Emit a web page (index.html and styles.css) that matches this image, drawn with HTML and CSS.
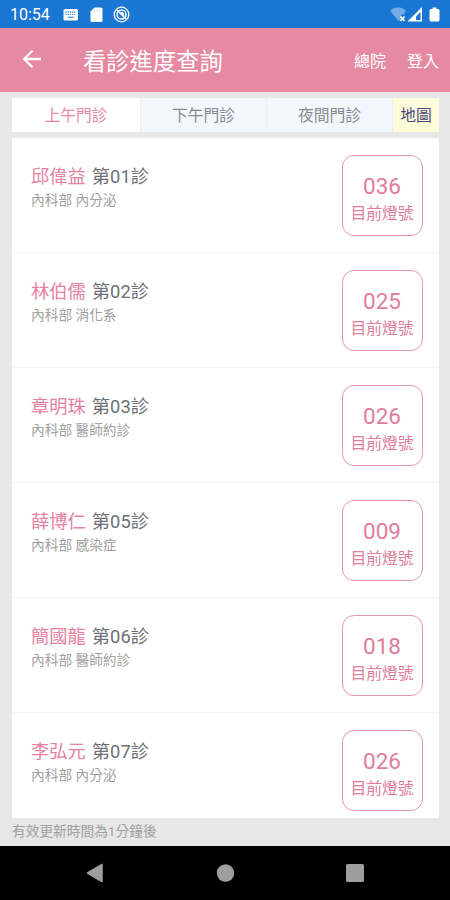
FILE: index.html
```html
<!DOCTYPE html>
<html lang="zh-Hant">
<head>
<meta charset="utf-8">
<title>看診進度查詢</title>
<link rel="stylesheet" href="styles.css">
</head>
<body>
<div class="screen">
  <div class="status">
    <span class="time">10:54</span>
    <svg class="status-icons" width="68" height="18" viewBox="0 0 68 18">
      <rect x="0.5" y="4" width="14.5" height="11.5" rx="1.5" fill="#fff"/>
      <path d="M2.500 7h10.500M2.500 9.300h10.500" stroke="#4a92dc" stroke-width="1.300" stroke-dasharray="1.300 .8"/>
      <path d="M5 12.300h6" stroke="#4a92dc" stroke-width="1.200"/>
      <path d="M31.500 2.500h6.500q1.500 0 1.500 1.500v11.500q0 1.500-1.500 1.500h-9q-1.500 0-1.500-1.500v-9z" fill="#fff"/>
      <path d="M31.500 4.500v2M34 4.500v2M36.500 4.500v2" stroke="#a9cdf2" stroke-width=".9"/>
      <circle cx="58.500" cy="9.500" r="7.300" fill="none" stroke="#fff" stroke-width="1.300"/>
      <circle cx="58.500" cy="9.500" r="4.500" fill="none" stroke="#fff" stroke-width="1.500"/>
      <path d="M54 5l9 9M57.500 7.500q3 0 3 3" fill="none" stroke="#fff" stroke-width="1.500"/>
    </svg>
    <svg class="signals" width="52" height="18" viewBox="0 0 52 18">
      <path d="M0 5.500q8-6.500 16 0l-2 4h-3v4.500l-2.500 2z" fill="#73abe6"/>
      <path d="M10.500 11.500l4 4.500M14.500 11.500l-4 4.500" stroke="#fff" stroke-width="1.700"/>
      <path d="M32 2v14.500H17.500z" fill="#fff"/>
      <path d="M30.500 7v8h-4.500v-3.500z" fill="#1976d2"/>
      <path d="M42.500 2.500h4v1.500h1.500q1.500 0 1.500 1.500v9.500q0 1.500-1.500 1.500h-7q-1.500 0-1.500-1.500v-9.500q0-1.500 1.500-1.500h1.500z" fill="#fff"/>
    </svg>
  </div>
  <header class="appbar">
    <svg class="back" width="20" height="20" viewBox="0 0 20 20">
      <path d="M19 10H2.500M10.500 1.700L2.200 10l8.300 8.300" fill="none" stroke="#fff" stroke-width="2.300"/>
    </svg>
    <h1 class="title">看診進度查詢</h1>
    <a class="action">總院</a>
    <a class="action">登入</a>
  </header>
  <main class="content">
    <nav class="tabs">
      <a class="tab active">上午門診</a>
      <a class="tab">下午門診</a>
      <a class="tab">夜間門診</a>
      <a class="map">地圖</a>
    </nav>
    <section class="list">
      <article class="row"><div class="info"><div class="line"><span class="doctor">邱偉益</span><span class="room">第01診</span></div><div class="dept">內科部 內分泌</div></div><div class="badge"><span class="num">036</span><span class="label">目前燈號</span></div></article>
      <article class="row"><div class="info"><div class="line"><span class="doctor">林伯儒</span><span class="room">第02診</span></div><div class="dept">內科部 消化系</div></div><div class="badge"><span class="num">025</span><span class="label">目前燈號</span></div></article>
      <article class="row"><div class="info"><div class="line"><span class="doctor">章明珠</span><span class="room">第03診</span></div><div class="dept">內科部 醫師約診</div></div><div class="badge"><span class="num">026</span><span class="label">目前燈號</span></div></article>
      <article class="row"><div class="info"><div class="line"><span class="doctor">薛博仁</span><span class="room">第05診</span></div><div class="dept">內科部 感染症</div></div><div class="badge"><span class="num">009</span><span class="label">目前燈號</span></div></article>
      <article class="row"><div class="info"><div class="line"><span class="doctor">簡國龍</span><span class="room">第06診</span></div><div class="dept">內科部 醫師約診</div></div><div class="badge"><span class="num">018</span><span class="label">目前燈號</span></div></article>
      <article class="row"><div class="info"><div class="line"><span class="doctor">李弘元</span><span class="room">第07診</span></div><div class="dept">內科部 內分泌</div></div><div class="badge"><span class="num">026</span><span class="label">目前燈號</span></div></article>
    </section>
    <p class="note">有效更新時間為1分鐘後</p>
  </main>
  <footer class="navbar">
    <svg width="18" height="20" viewBox="0 0 18 20"><path d="M16 1.500v17L1.500 10z" fill="#9e9e9e" stroke="#9e9e9e" stroke-width="1.500" stroke-linejoin="round"/></svg>
    <svg width="18" height="20" viewBox="0 0 18 20"><circle cx="9.500" cy="10" r="8.700" fill="#9e9e9e"/></svg>
    <svg width="18" height="20" viewBox="0 0 18 20"><rect y="1" width="18" height="18" rx="1.500" fill="#9e9e9e"/></svg>
  </footer>
</div>
</body>
</html>
```
FILE: styles.css
```css
* { box-sizing: border-box; }
body {
  margin: 0;
  font-family: Roboto, "Noto Sans CJK TC", sans-serif;
}
.screen {
  width: 450px;
  height: 900px;
  display: flex;
  flex-direction: column;
  overflow: hidden;
  background: #e7e7e7;
}
.status {
  height: 28px;
  flex: none;
  display: flex;
  align-items: center;
  padding: 1px 8px 0 10px;
  background: #1976d2;
  color: #fff;
}
.time {
  width: 53px;
  padding-top: 1px;
  font-size: 16px;
  line-height: 20px;
}
.status-icons { margin-bottom: 1px; }
.signals { margin: 0 0 1px auto; width: 52px; }
.appbar {
  height: 64px;
  flex: none;
  display: flex;
  align-items: center;
  padding: 0 11px 0 22px;
  background: #e68aa4;
  color: #fff;
}
.back { margin-bottom: 2px; }
.title {
  flex: 1;
  margin: 0 0 0 41px;
  padding-top: 3px;
  font-size: 23.3px;
  font-weight: 400;
  line-height: 32px;
}
.action {
  margin-left: 21px;
  padding-top: 3px;
  font-size: 16px;
  line-height: 24px;
}
.content {
  height: 754px;
  flex: none;
  padding: 6px 11px 0 12px;
}
.tabs {
  display: flex;
  height: 34px;
  font-size: 15.8px;
  line-height: 36px;
  text-align: center;
}
.tab {
  width: 126px;
  border-right: 1px solid #e9eff5;
  background: #f3f7fd;
  color: #858a90;
}
.tab.active { background: #fff; color: #e68aa4; width: 129px; }
.map {
  flex: 1;
  background: #fdfdd9;
  color: #4b4583;
}
.list {
  height: 680px;
  margin-top: 6px;
  overflow: hidden;
  background: #fff;
}
.row {
  display: flex;
  justify-content: space-between;
  align-items: flex-start;
  height: 115px;
  padding: 17px 16.5px 0 19px;
  border-bottom: 1px solid #f6f6f6;
}
.info { padding-top: 9px; }
.line {
  display: flex;
  gap: 6px;
  font-size: 18.3px;
  line-height: 25px;
}
.doctor { color: #e6829f; }
.room { color: #6b7177; }
.dept {
  margin-top: 1px;
  font-size: 13.7px;
  line-height: 20px;
  color: #a0a0a0;
}
.badge {
  width: 81px;
  height: 81px;
  display: flex;
  flex-direction: column;
  align-items: center;
  padding-top: 16px;
  border: 1.5px solid #e299ad;
  border-radius: 12px;
  color: #e07d9a;
}
.num { font-size: 22.5px; line-height: 29px; }
.label { font-size: 15.8px; line-height: 26px; white-space: nowrap; }
.note {
  margin: 3px 0 0;
  font-size: 13.7px;
  line-height: 20px;
  color: #a0a0a0;
}
.navbar {
  height: 54px;
  flex: none;
  display: flex;
  justify-content: space-between;
  align-items: center;
  padding: 0 86px;
  background: #000;
}
```
